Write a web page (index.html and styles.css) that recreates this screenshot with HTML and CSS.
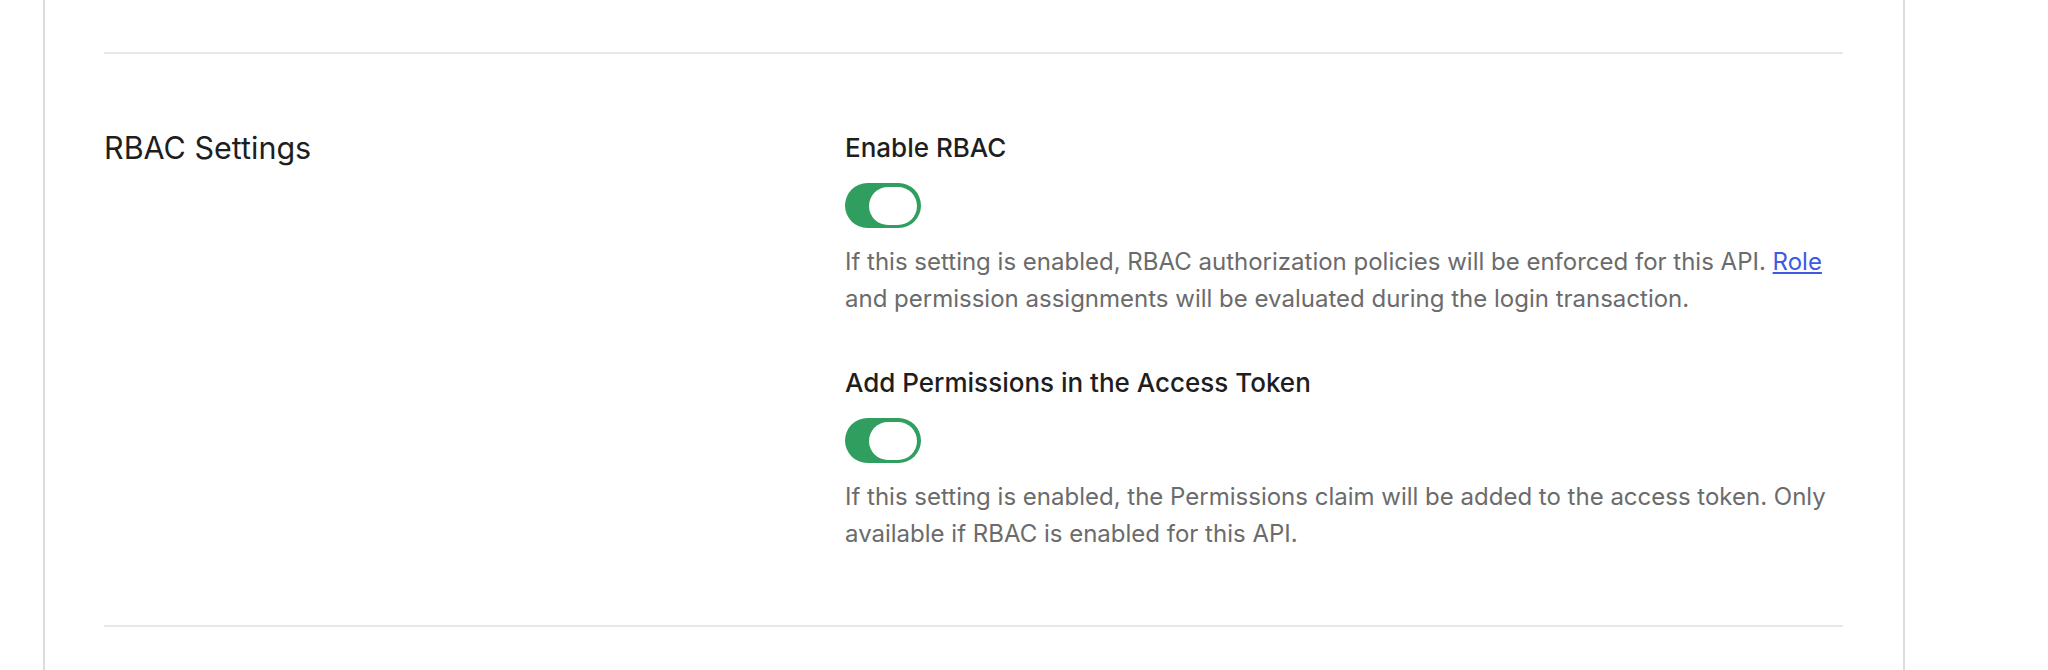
FILE: index.html
```html
<!DOCTYPE html>
<html lang="en">
<head>
    <meta charset="UTF-8">
    <meta name="viewport" content="width=device-width, initial-scale=1.0">
    <title>API Settings</title>
    <link rel="stylesheet" href="styles.css">
</head>
<body>
    <div class="page">
        <div class="card">
            <hr class="divider">
            <section class="settings-section">
                <h2 class="section-title">RBAC Settings</h2>
                <div class="section-body">
                    <div class="field">
                        <label class="field__label">Enable RBAC</label>
                        <button class="toggle toggle--on" aria-pressed="true"><span class="toggle__knob"></span></button>
                        <p class="field__help">If this setting is enabled, RBAC authorization policies will be enforced for this API. <a href="#">Role</a> and permission assignments will be evaluated during the login transaction.</p>
                    </div>
                    <div class="field">
                        <label class="field__label">Add Permissions in the Access Token</label>
                        <button class="toggle toggle--on" aria-pressed="true"><span class="toggle__knob"></span></button>
                        <p class="field__help">If this setting is enabled, the Permissions claim will be added to the access token. Only available if RBAC is enabled for this API.</p>
                    </div>
                </div>
            </section>
            <hr class="divider">
        </div>
    </div>
</body>
</html>
```

FILE: styles.css
```css
:root {
   --text: #1e1e1e;
   --text-muted: #6b6b6b;
   --link: #3f59e4;
   --green: #2f9e5f;
   --border: #dcdcdc;
   --divider: #e8e8e8;
}

* {
   padding: 0;
   margin: 0;
   box-sizing: border-box;
}

body {
   font-family: Inter, "Noto Sans", sans-serif;
   color: var(--text);
   background-color: #ffffff;
}

.page {
   padding: 0 143px 0 43px;
}

.card {
   border-left: 2px solid var(--border);
   border-right: 2px solid var(--border);
   padding: 52px 60px 60px 59px;
   min-height: 670px;
}

.divider {
   border: none;
   border-top: 2px solid var(--divider);
}

.settings-section {
   display: grid;
   grid-template-columns: 741px 1fr;
   padding: 78px 0 73px;
}

.section-title {
   font-size: 30.5px;
   font-weight: 400;
   line-height: 32px;
}

.field + .field {
   margin-top: 50px;
}

.field__label {
   display: block;
   font-size: 26px;
   font-weight: 500;
   line-height: 32px;
}

.toggle {
   display: flex;
   justify-content: flex-end;
   align-items: center;
   width: 76px;
   height: 45px;
   margin-top: 19px;
   padding: 0 4px;
   border: none;
   border-radius: 23px;
   background-color: var(--green);
   cursor: pointer;
}

.toggle__knob {
   width: 48px;
   height: 38px;
   border-radius: 19px;
   background-color: #ffffff;
}

.field__help {
   margin-top: 15px;
   font-size: 24px;
   line-height: 37px;
   color: var(--text-muted);
}

.field__help a {
   color: var(--link);
   text-decoration: underline;
}
```
